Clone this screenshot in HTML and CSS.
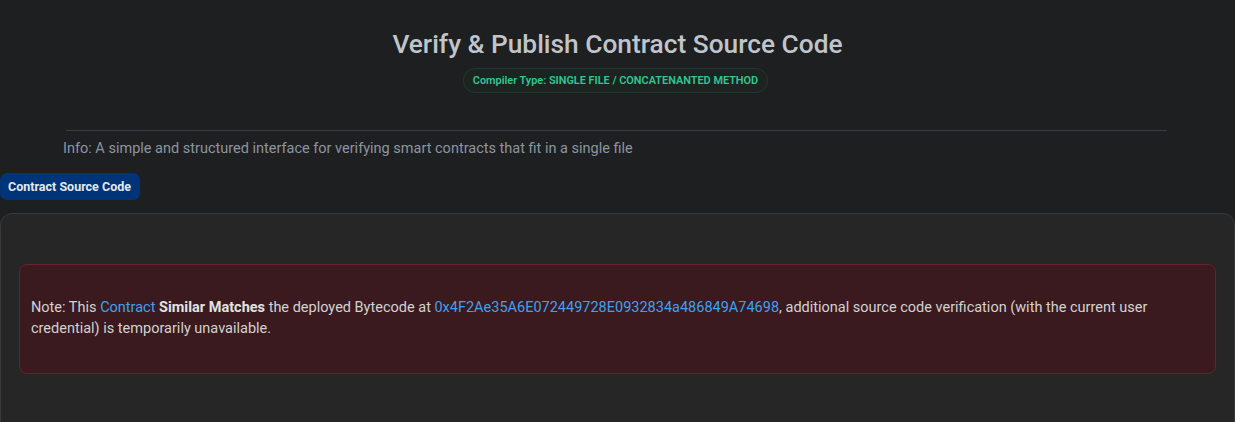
FILE: index.html
```html
<!DOCTYPE html>
<html lang="en">
<head>
<meta charset="utf-8">
<title>Verify &amp; Publish Contract Source Code</title>
<link rel="stylesheet" href="styles.css">
</head>
<body>
<header class="header">
  <h1 class="title">Verify &amp; Publish Contract Source Code</h1>
  <span class="badge">Compiler Type: SINGLE FILE / CONCATENANTED METHOD</span>
</header>
<hr class="divider">
<p class="info">Info: A simple and structured interface for verifying smart contracts that fit in a single file</p>
<div class="tabs"><span class="tab">Contract Source Code</span></div>
<section class="card">
  <div class="alert">
    Note: This <a class="link" href="#">Contract</a> <strong class="strong">Similar Matches</strong> the deployed Bytecode at <a class="link" href="#">0x4F2Ae35A6E072449728E0932834a486849A74698</a>, additional source code verification (with the current user credential) is temporarily unavailable.
  </div>
</section>
</body>
</html>
```
FILE: styles.css
```css
html, body {
  margin: 0;
  padding: 0;
  background: #1e1f21;
  font-family: Roboto, "Liberation Sans", sans-serif;
  overflow: hidden;
}
.header {
  padding-top: 27px;
  text-align: center;
}
.title {
  margin: 0;
  font-size: 26.3px;
  line-height: 34px;
  font-weight: 500;
  color: #c0c4cb;
}
.badge {
  display: inline-block;
  margin: 7px 4px 0 0;
  height: 23px;
  line-height: 23px;
  padding: 0 9px;
  border-radius: 12px;
  border: 1px solid #1e3a2f;
  background: #1c2321;
  color: #2ec890;
  font-size: 10.9px;
  font-weight: 600;
}
.divider {
  margin: 37px 68px 0 66px;
  border: 0;
  border-top: 1px solid #3b3c3f;
  height: 0;
}
.info {
  margin: 9px 0 0 63px;
  font-size: 14.5px;
  line-height: 18px;
  color: #8c95a0;
}
.tabs {
  margin-top: 15px;
}
.tab {
  display: inline-block;
  height: 27px;
  line-height: 27px;
  padding: 0 9px 0 8px;
  border-radius: 7px;
  background: #003478;
  color: #e4e8ee;
  font-size: 12.5px;
  font-weight: 700;
}
.card {
  margin-top: 13px;
  background: #262626;
  border: 1px solid #393939;
  border-radius: 12px;
  padding: 50px 18px 60px;
}
.alert {
  background: #3a1a1e;
  border: 1px solid #6b2129;
  border-radius: 8px;
  padding: 32px 11px 34px;
  font-size: 14.5px;
  line-height: 21px;
  color: #d2d2d2;
}
.link {
  color: #3da1f3;
  text-decoration: none;
}
.strong {
  color: #e2e2e2;
  font-weight: 700;
}
```
